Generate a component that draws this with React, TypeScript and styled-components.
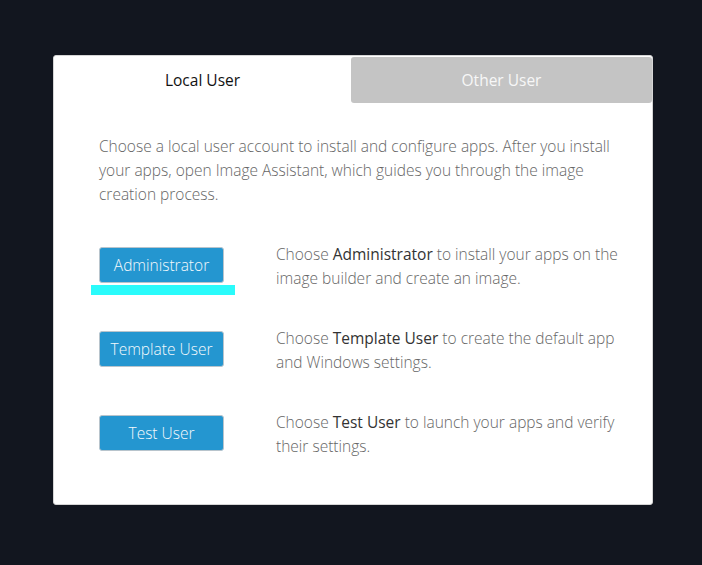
import styled, { createGlobalStyle } from 'styled-components';

const GlobalStyle = createGlobalStyle`
  html, body {
    margin: 0;
    padding: 0;
    background: #12161f;
  }
  body {
    font-family: "Open Sans", "Liberation Sans", sans-serif;
  }
`;

const roles = [
  {
    id: 'admin',
    label: 'Administrator',
    bold: 'Administrator',
    first: ' to install your apps on the',
    second: 'image builder and create an image.',
    marked: true,
  },
  {
    id: 'template',
    label: 'Template User',
    bold: 'Template User',
    first: ' to create the default app',
    second: 'and Windows settings.',
    marked: false,
  },
  {
    id: 'test',
    label: 'Test User',
    bold: 'Test User',
    first: ' to launch your apps and verify',
    second: 'their settings.',
    marked: false,
  },
];

const App = () => {
  return (
    <Page>
      <GlobalStyle />
      <Card>
        <Tabs>
          <Tab active>Local User</Tab>
          <Tab>Other User</Tab>
        </Tabs>
        <Body>
          <Intro>
            Choose a local user account to install and configure apps. After you install
            <br />
            your apps, open Image Assistant, which guides you through the image
            <br />
            creation process.
          </Intro>
          <RoleList>
            {roles.map((r) => (
              <RoleRow key={r.id}>
                <ButtonCell>
                  <RoleButton>{r.label}</RoleButton>
                  {r.marked && <Highlight />}
                </ButtonCell>
                <RoleText>
                  Choose <strong>{r.bold}</strong>
                  {r.first}
                  <br />
                  {r.second}
                </RoleText>
              </RoleRow>
            ))}
          </RoleList>
        </Body>
      </Card>
    </Page>
  );
};

const Page = styled.div`
  width: 702px;
  height: 565px;
  padding: 55px 0 0 53px;
  box-sizing: border-box;
`;

const Card = styled.div`
  width: 600px;
  height: 450px;
  box-sizing: border-box;
  background: #fff;
  border: 1px solid #d5d5d5;
  border-radius: 3px;
`;

const Tabs = styled.div`
  display: flex;
  height: 47px;
`;

const Tab = styled.div<{ active?: boolean }>`
  flex: ${(p) => (p.active ? '0 0 297px' : '1')};
  display: flex;
  align-items: center;
  justify-content: center;
  font-size: 15.5px;
  font-weight: 400;
  color: ${(p) => (p.active ? '#111' : '#f7f7f7')};
  background: ${(p) => (p.active ? '#fff' : '#c4c4c4')};
  border-radius: 3px;
  margin-top: ${(p) => (p.active ? '0' : '1px')};
`;

const Body = styled.div`
  padding: 31px 20px 0 45px;
`;

const Intro = styled.p`
  margin: 0 0 41px;
  font-size: 15.5px;
  font-weight: 300;
  line-height: 24px;
  color: #666;
  white-space: nowrap;
`;

const RoleList = styled.div`
  display: flex;
  flex-direction: column;
  gap: 35px;
`;

const RoleRow = styled.div`
  display: flex;
  align-items: flex-start;
  height: 49px;
`;

const ButtonCell = styled.div`
  position: relative;
  width: 177px;
  flex-shrink: 0;
`;

const RoleButton = styled.button`
  width: 125px;
  height: 36px;
  padding: 0;
  background: #2496d0;
  border: 1px solid #b8c4cc;
  border-radius: 3px;
  color: #f4f9fc;
  font-family: inherit;
  font-size: 15.5px;
  font-weight: 300;
  cursor: pointer;
`;

const Highlight = styled.div`
  position: absolute;
  left: -8px;
  top: 38px;
  width: 144px;
  height: 10px;
  background: #2afbfb;
`;

const RoleText = styled.p`
  margin: -5px 0 0;
  font-size: 15.5px;
  font-weight: 300;
  line-height: 24px;
  color: #666;
  white-space: nowrap;

  strong {
    font-weight: 400;
    color: #333;
  }
`;

export default App;
